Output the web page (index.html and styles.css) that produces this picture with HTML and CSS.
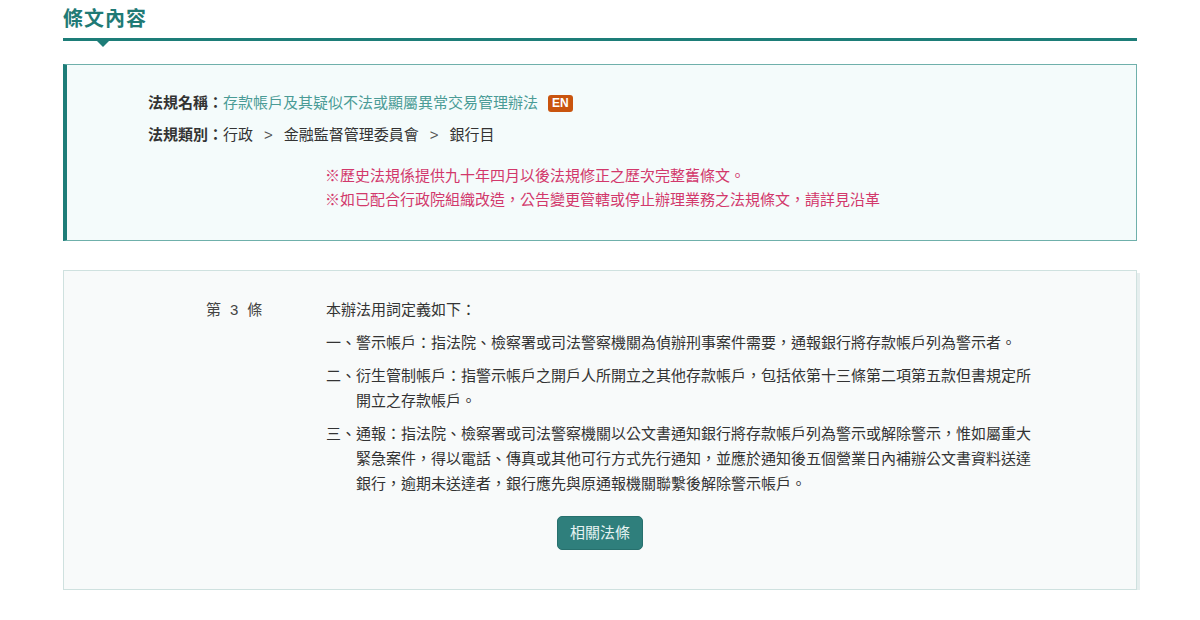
FILE: index.html
```html
<!DOCTYPE html>
<html lang="zh-Hant">
<head>
<meta charset="utf-8">
<title>條文內容</title>
<link rel="stylesheet" href="styles.css">
</head>
<body>
<div class="page">
  <div class="section-head">
    <h2 class="section-title">條文內容</h2>
  </div>

  <div class="info-box">
    <div class="info-row">
      <span class="info-label">法規名稱：</span><a class="law-link" href="#">存款帳戶及其疑似不法或顯屬異常交易管理辦法</a><span class="en-badge">EN</span>
    </div>
    <div class="info-row">
      <span class="info-label">法規類別：</span>行政<span class="crumb-sep">&gt;</span>金融監督管理委員會<span class="crumb-sep">&gt;</span>銀行目
    </div>
    <div class="notes">
      <p class="note">※歷史法規係提供九十年四月以後法規修正之歷次完整舊條文。</p>
      <p class="note">※如已配合行政院組織改造，公告變更管轄或停止辦理業務之法規條文，請詳見沿革</p>
    </div>
  </div>

  <div class="article-box">
    <div class="article">
      <div class="article-no">第<span class="article-num">3</span>條</div>
      <div class="article-body">
        <p class="para">本辦法用詞定義如下：</p>
        <p class="para item">一、警示帳戶：指法院、檢察署或司法警察機關為偵辦刑事案件需要，通報銀行將存款帳戶列為警示者。</p>
        <p class="para item">二、衍生管制帳戶：指警示帳戶之開戶人所開立之其他存款帳戶，包括依第十三條第二項第五款但書規定所開立之存款帳戶。</p>
        <p class="para item">三、通報：指法院、檢察署或司法警察機關以公文書通知銀行將存款帳戶列為警示或解除警示，惟如屬重大緊急案件，得以電話、傳真或其他可行方式先行通知，並應於通知後五個營業日內補辦公文書資料送達銀行，逾期未送達者，銀行應先與原通報機關聯繫後解除警示帳戶。</p>
      </div>
    </div>
    <div class="actions">
      <a class="btn" href="#">相關法條</a>
    </div>
  </div>
</div>
</body>
</html>
```

FILE: styles.css
```css
* { box-sizing: border-box; }
html, body { margin: 0; padding: 0; background: #ffffff; }
body {
  font-family: "Liberation Sans", "Noto Sans CJK TC", sans-serif;
  color: #333333;
  font-size: 15px;
}
.page {
  width: 1074px;
  margin: 0 auto;
}
.section-head {
  position: relative;
  padding: 6px 0 6px;
  border-bottom: 3px solid #1d7d78;
}
.section-head::after {
  content: "";
  position: absolute;
  left: 34px;
  bottom: -9px;
  border-left: 6px solid transparent;
  border-right: 6px solid transparent;
  border-top: 6px solid #1d7d78;
}
.section-title {
  margin: 0;
  font-size: 20px;
  line-height: 26px;
  font-weight: bold;
  color: #1f7a75;
  letter-spacing: 1px;
}
.info-box {
  margin-top: 23px;
  background: #f4fbfb;
  border: 1px solid #6fb0ab;
  border-left: 4px solid #1d7d78;
  padding: 26px 20px 28px 81px;
}
.info-row {
  line-height: 24px;
  margin-bottom: 8px;
  display: flex;
  align-items: center;
}
.info-label { font-weight: bold; color: #333; }
.law-link { color: #4a9b96; text-decoration: none; }
.en-badge {
  display: inline-block;
  margin-left: 10px;
  background: #c9540e;
  color: #ffffff;
  font-size: 12px;
  font-weight: bold;
  line-height: 17px;
  padding: 0 4px;
  border-radius: 3px;
}
.crumb-sep { margin: 0 11px; color: #555; }
.notes {
  margin-top: 17px;
  padding-left: 177px;
}
.note {
  margin: 0;
  line-height: 24px;
  color: #d2386b;
  font-size: 15px;
}
.article-box {
  margin-top: 29px;
  background: #f8fafa;
  border: 1px solid #cfe1df;
  box-shadow: 3px 3px 0 #e6eeee;
  padding: 26px 0 39px;
}
.article {
  display: flex;
  padding-left: 142px;
}
.article-no {
  width: 120px;
  flex: none;
  line-height: 25px;
  color: #444;
}
.article-num { margin: 0 9px; }
.article-body {
  width: 716px;
}
.para {
  margin: 0 0 8px;
  line-height: 25px;
  color: #333;
}
.item {
  padding-left: 2em;
  text-indent: -2em;
}
.actions {
  display: flex;
  justify-content: center;
  margin-top: 12px;
}
.btn {
  display: inline-block;
  background: #2f7f7c;
  color: #e6f3f2;
  text-decoration: none;
  font-size: 15px;
  line-height: 32px;
  height: 34px;
  padding: 0 12px;
  border-radius: 5px;
  border: 1px solid #27706d;
}
```
